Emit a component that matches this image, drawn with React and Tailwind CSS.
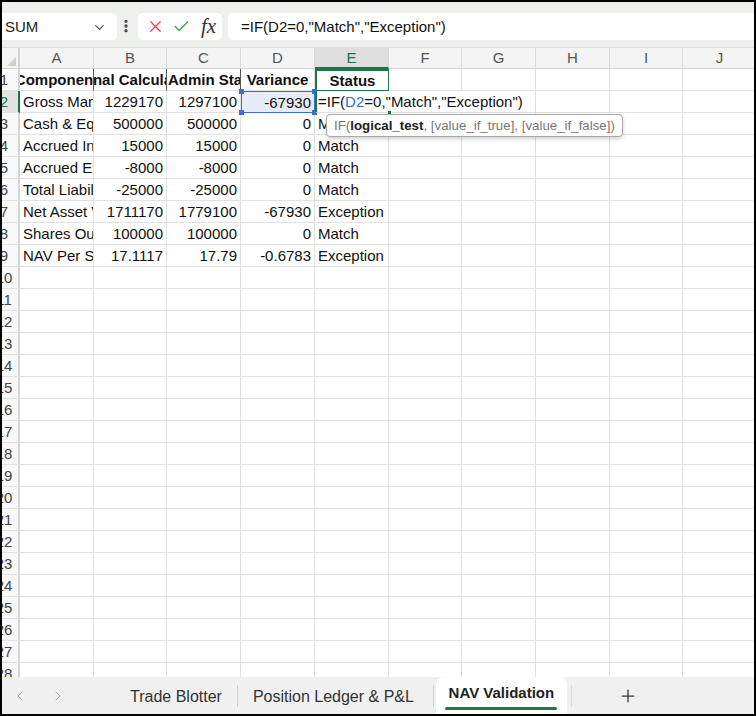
import React from "react";
import {
  ChevronDown,
  ChevronLeft,
  ChevronRight,
  EllipsisVertical,
  X,
  Check,
  Plus,
} from "lucide-react";

const colWidths = [74, 73, 74, 74, 74, 73, 74, 74, 73, 74];
const colLetters = ["A", "B", "C", "D", "E", "F", "G", "H", "I", "J"];

// rows 3..9
const dataRows = [
  ["Cash & Equivalents", "500000", "500000", "0", "Match"],
  ["Accrued Income", "15000", "15000", "0", "Match"],
  ["Accrued Expenses", "-8000", "-8000", "0", "Match"],
  ["Total Liabilities", "-25000", "-25000", "0", "Match"],
  ["Net Asset Value", "1711170", "1779100", "-67930", "Exception"],
  ["Shares Outstanding", "100000", "100000", "0", "Match"],
  ["NAV Per Share", "17.1117", "17.79", "-0.6783", "Exception"],
];

const RowHeader = ({ n, active }) => (
  <div
    className={`w-[18px] h-full shrink-0 overflow-hidden flex border-r-2 border-b ${
      active
        ? "bg-[#e2e2e2] border-r-[#217346] text-[#217346]"
        : "bg-[#f8f8f8] border-r-[#d4d4d4] text-[#444]"
    } border-b-[#e1e1e1]`}
  >
    <div className="w-[34px] -ml-[15px] shrink-0 flex items-center justify-center pt-[2px] text-[15px]">
      {n}
    </div>
  </div>
);

const Cell = ({ i, className = "", children }) => (
  <div
    style={{ width: colWidths[i] }}
    className={`h-full shrink-0 flex items-center overflow-hidden whitespace-nowrap px-[3px] pt-[2px] text-[15px] text-[#111] border-r border-b border-[#e1e1e1] ${className}`}
  >
    {children}
  </div>
);

const FormulaBar = () => (
  <div className="h-[45px] shrink-0 bg-[#eef0ed] flex items-start pt-[11px]">
    <div className="w-[115px] h-[27px] bg-white rounded-r-[5px] flex items-center justify-between pl-[3px] pr-[10px] pt-[1px] text-[15px] text-[#222]">
      <span>SUM</span>
      <ChevronDown size={15} className="text-[#555]" />
    </div>
    <EllipsisVertical size={16} strokeWidth={3} className="ml-[1px] mt-[5px] text-[#444]" />
    <div className="ml-[4px] w-[84px] h-[27px] bg-white rounded-[5px] flex items-center pl-[8px]">
      <X size={19} strokeWidth={1.6} className="text-[#e5484d]" />
      <Check size={19} strokeWidth={1.6} className="ml-[7px] text-[#3b9a5e]" />
      <span className="ml-[10px] font-['Liberation_Serif',serif] italic text-[21px] leading-none text-[#333]">
        fx
      </span>
    </div>
    <div className="ml-[6px] flex-1 h-[27px] bg-white rounded-l-[5px] flex items-center pl-[13px] pt-[1px] text-[15px] text-[#111]">
      =IF(D2=0,"Match","Exception")
    </div>
  </div>
);

const ColumnHeaders = () => (
  <div className="h-[22px] shrink-0 flex bg-[#f4f4f4] border-t border-[#dcdcdc]">
    <div className="w-[18px] h-full shrink-0 border-r-2 border-b border-[#d4d4d4] flex items-end justify-end p-[2px]">
      <div className="w-0 h-0 border-l-[9px] border-l-transparent border-b-[9px] border-b-[#d0d0d0]" />
    </div>
    {colLetters.map((l, i) => (
      <div
        key={l}
        style={{ width: colWidths[i] }}
        className={`h-full shrink-0 flex items-center justify-center pt-[1px] text-[15px] border-r border-[#dadada] ${
          l === "E"
            ? "bg-[#dedede] text-[#217346] border-b-2 border-b-[#217346]"
            : "text-[#555] border-b border-b-[#d4d4d4]"
        }`}
      >
        {l}
      </div>
    ))}
  </div>
);

const SheetTabs = () => (
  <div className="h-[37px] shrink-0 bg-[#f0f0f0] flex items-stretch text-[16px] text-[#333]">
    <div className="w-[128px] shrink-0 flex items-center pl-[10px] gap-[22px] text-[#a8a8a8]">
      <ChevronLeft size={16} strokeWidth={1.5} />
      <ChevronRight size={16} strokeWidth={1.5} />
    </div>
    <div className="flex items-center pt-[2px]">Trade Blotter</div>
    <div className="mx-[15px] self-center w-px h-[22px] bg-[#d2d2d2]" />
    <div className="flex items-center pt-[2px]">Position Ledger &amp; P&amp;L</div>
    <div className="ml-[19px] self-center w-px h-[22px] bg-[#d2d2d2]" />
    <div className="ml-[2px] w-[131px] bg-white rounded-t-[8px] flex flex-col items-center pt-[7px]">
      <span className="font-bold text-[15px] text-[#222] leading-[18px]">NAV Validation</span>
      <div className="mt-[5px] w-[112px] h-[2.5px] bg-[#1e7b45] rounded-full" />
    </div>
    <div className="ml-[4px] self-center w-px h-[22px] bg-[#d8d8d8]" />
    <div className="ml-[46px] flex items-center text-[#333]">
      <Plus size={20} strokeWidth={1.5} />
    </div>
  </div>
);

const Corner = ({ className }) => (
  <div className={`absolute w-[5px] h-[5px] bg-[#3a6fd6] ${className}`} />
);

export default function App() {
  return (
    <div className="w-[756px] h-[716px] bg-black p-[2px]">
      <div className="relative w-full h-full bg-white overflow-hidden flex flex-col font-['Liberation_Sans',Arial,sans-serif]">
        <FormulaBar />
        <ColumnHeaders />

        <div className="flex-1 overflow-hidden">
          {/* row 1: headers */}
          <div className="h-[22px] flex">
            <RowHeader n={1} />
            <Cell i={0} className="justify-center font-bold border-r-[#555]">Component</Cell>
            <Cell i={1} className="justify-center font-bold border-r-[#555]">Internal Calculation</Cell>
            <Cell i={2} className="font-bold border-r-[#555] !px-[1px]">Admin Statement</Cell>
            <Cell i={3} className="justify-center font-bold">Variance</Cell>
            <Cell i={4} className="justify-center font-bold border-2 !border-[#217346]">Status</Cell>
            {[5, 6, 7, 8, 9].map((i) => (
              <Cell key={i} i={i} />
            ))}
          </div>

          {/* row 2: editing E2 */}
          <div className="h-[22px] flex">
            <RowHeader n={2} active />
            <Cell i={0}>Gross Market Value</Cell>
            <Cell i={1} className="justify-end">1229170</Cell>
            <Cell i={2} className="justify-end">1297100</Cell>
            <div
              style={{ width: colWidths[3] }}
              className="relative h-full shrink-0 flex items-center justify-end px-[3px] pt-[2px] text-[15px] text-[#111] bg-[#e6ecf8] border-[1.5px] border-[#3a6fd6]"
            >
              -67930
              <Corner className="-left-[3px] -top-[3px]" />
              <Corner className="-right-[3px] -top-[3px]" />
              <Corner className="-left-[3px] -bottom-[3px]" />
              <Corner className="-right-[3px] -bottom-[3px]" />
            </div>
            <div
              style={{ width: colWidths[4] }}
              className="relative z-10 h-full shrink-0 border-l-2 border-[#217346] border-b border-b-[#e1e1e1]"
            >
              <span className="absolute left-0 top-0 h-[21px] flex items-center bg-white pl-[1px] pr-[4px] pt-[2px] whitespace-nowrap text-[15px] text-[#111]">
                =IF(<span className="text-[#2f6fd0]">D2</span>=0,"Match","Exception")
              </span>
              <div className="absolute -right-[3px] -bottom-[3px] w-[5px] h-[5px] bg-[#217346] border border-white" />
            </div>
            {[5, 6, 7, 8, 9].map((i) => (
              <Cell key={i} i={i} />
            ))}
          </div>

          {dataRows.map((r, ri) => (
            <div key={ri} className="h-[22px] flex">
              <RowHeader n={ri + 3} />
              <Cell i={0}>{r[0]}</Cell>
              <Cell i={1} className="justify-end">{r[1]}</Cell>
              <Cell i={2} className="justify-end">{r[2]}</Cell>
              <Cell i={3} className="justify-end">{r[3]}</Cell>
              <Cell i={4}>{r[4]}</Cell>
              {[5, 6, 7, 8, 9].map((i) => (
                <Cell key={i} i={i} />
              ))}
            </div>
          ))}

          {Array.from({ length: 19 }, (_, k) => k + 10).map((n) => (
            <div key={n} className="h-[22px] flex">
              <RowHeader n={n} />
              {colWidths.map((_, i) => (
                <Cell key={i} i={i} />
              ))}
            </div>
          ))}
        </div>

        <SheetTabs />

        {/* function argument tooltip */}
        <div className="absolute z-20 left-[324px] top-[112px] h-[23px] px-[7px] pt-[1px] bg-white border border-[#a9a9a9] rounded-[4px] shadow-[0_2px_4px_rgba(0,0,0,0.18)] flex items-center whitespace-nowrap text-[13.3px] text-[#777]">
          IF(<b className="text-[#222]">logical_test</b>, [value_if_true], [value_if_false])
        </div>
      </div>
    </div>
  );
}
